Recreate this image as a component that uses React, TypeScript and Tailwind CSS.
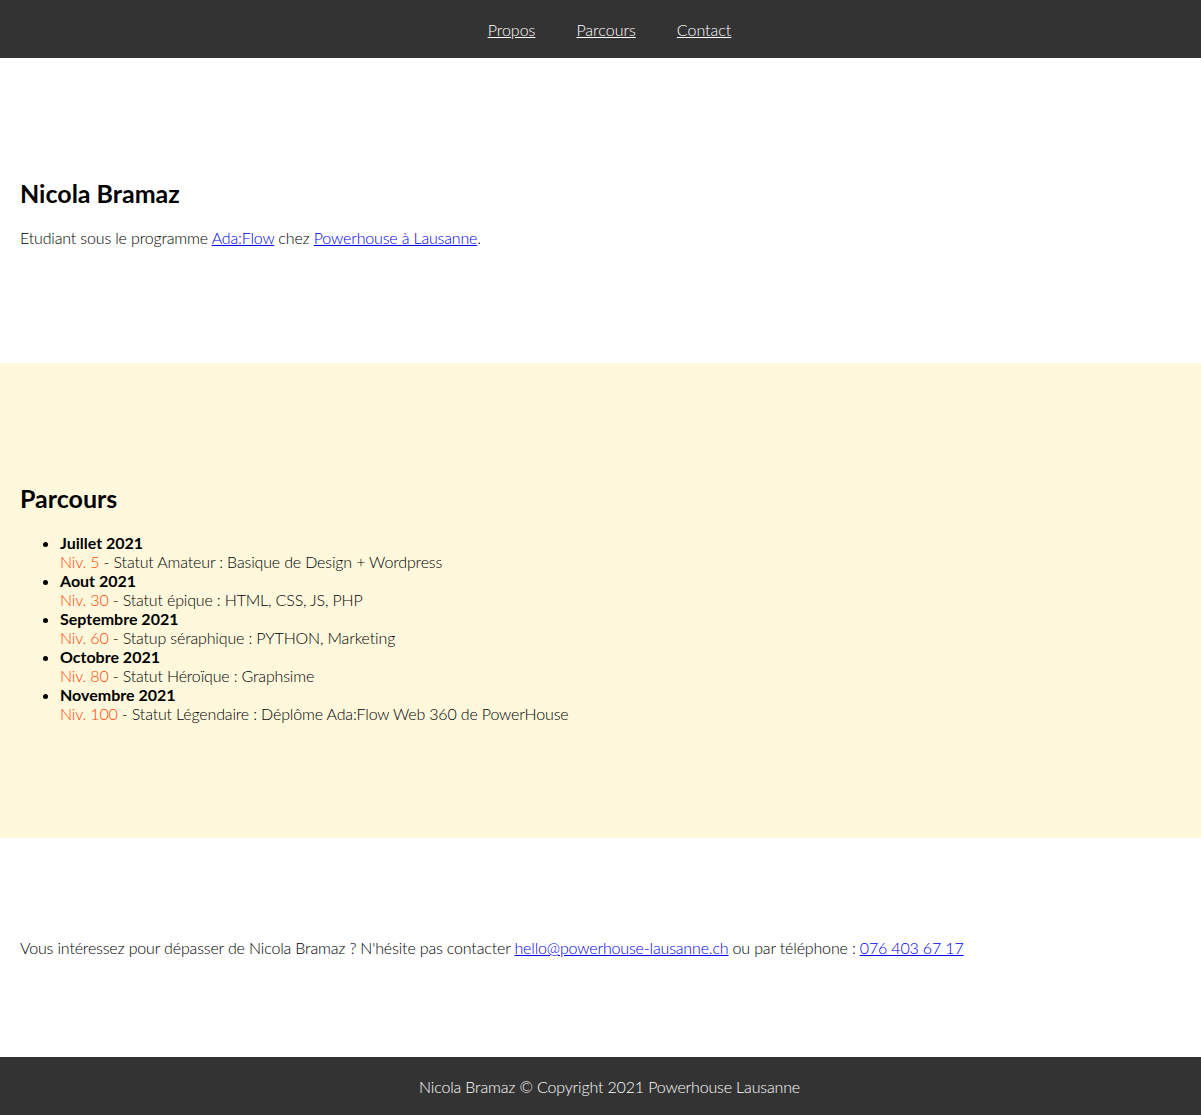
const parcours = [
  { month: 'Juillet 2021', niv: 'Niv. 5', text: ' - Statut Amateur : Basique de Design + Wordpress' },
  { month: 'Aout 2021', niv: 'Niv. 30', text: ' - Statut épique : HTML, CSS, JS, PHP' },
  { month: 'Septembre 2021', niv: 'Niv. 60', text: ' - Statup séraphique : PYTHON, Marketing' },
  { month: 'Octobre 2021', niv: 'Niv. 80', text: ' - Statut Héroïque : Graphsime' },
  { month: 'Novembre 2021', niv: 'Niv. 100', text: ' - Statut Légendaire : Déplôme Ada:Flow Web 360 de PowerHouse' },
];

const App = () => {
  return (
    <div className="font-['Lato',sans-serif] font-light text-[16px] leading-[19px] text-black bg-white">
      <header className="h-[58px] bg-[#333333] flex items-center justify-center">
        <nav className="flex gap-[41px] ml-[18px] text-white">
          <a href="#propos" className="underline">Propos</a>
          <a href="#parcours" className="underline">Parcours</a>
          <a href="#contact" className="underline">Contact</a>
        </nav>
      </header>

      <section id="propos" className="px-5 py-[100px]">
        <h2 className="text-[25px] leading-[normal] font-bold my-5">Nicola Bramaz</h2>
        <p className="mb-4 tracking-[-0.16px]">
          Etudiant sous le programme{' '}
          <a href="#" className="text-[#0000ee] underline">Ada:Flow</a> chez{' '}
          <a href="#" className="text-[#0000ee] underline">Powerhouse à Lausanne</a>.
        </p>
      </section>

      <section id="parcours" className="bg-[#fff8dc] px-5 py-[100px]">
        <h2 className="text-[25px] leading-[normal] font-bold my-5">Parcours</h2>
        <ul className="list-disc pl-10 mb-[15px] tracking-[-0.16px]">
          {parcours.map((p) => (
            <li key={p.month}>
              <span className="font-bold tracking-normal">{p.month}</span>
              <br />
              <span className="text-[#ff4500]">{p.niv}</span>
              {p.text}
            </li>
          ))}
        </ul>
      </section>

      <section id="contact" className="px-5 py-[100px]">
        <div className="tracking-[-0.16px]">
          Vous intéressez pour dépasser de Nicola Bramaz ? N'hésite pas contacter{' '}
          <a href="#" className="text-[#0000ee] underline">hello@powerhouse-lausanne.ch</a> ou par téléphone :{' '}
          <a href="#" className="text-[#0000ee] underline">076 403 67 17</a>
        </div>
      </section>

      <footer className="h-[58px] bg-[#333333] flex items-center justify-center text-white">
        <span className="ml-[18px] tracking-[-0.16px]">Nicola Bramaz © Copyright 2021 Powerhouse Lausanne</span>
      </footer>
    </div>
  );
};

export default App;
